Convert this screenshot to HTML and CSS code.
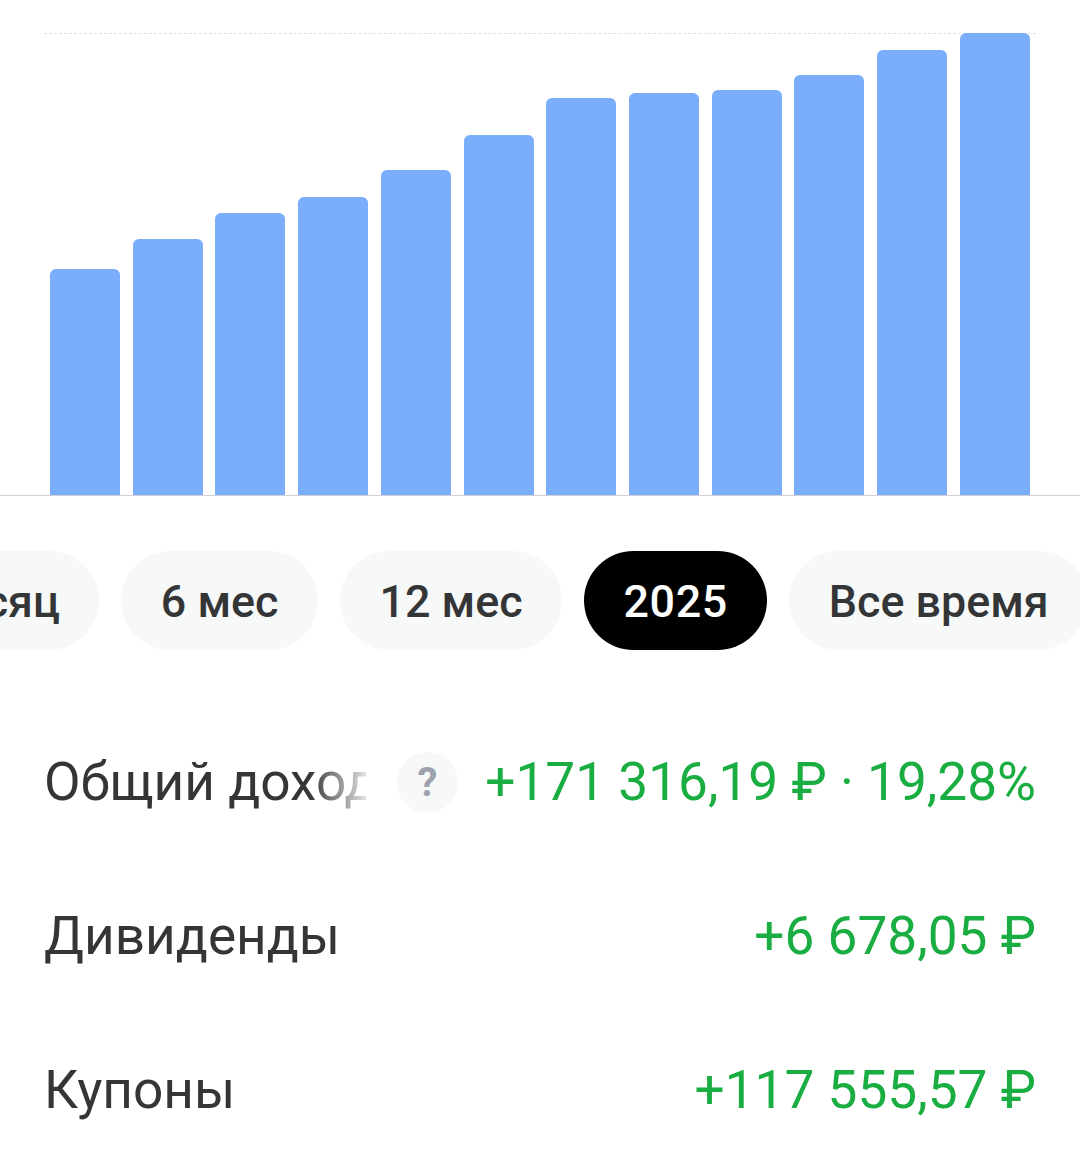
FILE: index.html
```html
<!DOCTYPE html>
<html lang="ru">
<head>
<meta charset="utf-8">
<title>Доход</title>
<link rel="stylesheet" href="styles.css">
</head>
<body>
<main class="page">
  <section class="chart">
    <div class="plot">
      <div class="bar" style="height:226px"></div>
      <div class="bar" style="height:256px"></div>
      <div class="bar" style="height:282px"></div>
      <div class="bar" style="height:298px"></div>
      <div class="bar" style="height:325px"></div>
      <div class="bar" style="height:360px"></div>
      <div class="bar" style="height:397px"></div>
      <div class="bar" style="height:402px"></div>
      <div class="bar" style="height:405px"></div>
      <div class="bar" style="height:420px"></div>
      <div class="bar" style="height:445px"></div>
      <div class="bar" style="height:462px"></div>
    </div>
  </section>
  <nav class="chips">
    <span class="chip">Месяц</span>
    <span class="chip">6 мес</span>
    <span class="chip">12 мес</span>
    <span class="chip chip-active">2025</span>
    <span class="chip">Все время</span>
  </nav>
  <section class="rows">
    <div class="row">
      <span class="label label-fade">Общий доход</span>
      <span class="help">?</span>
      <span class="value">+171 316,19 ₽ · 19,28%</span>
    </div>
    <div class="row">
      <span class="label">Дивиденды</span>
      <span class="value">+6 678,05 ₽</span>
    </div>
    <div class="row">
      <span class="label">Купоны</span>
      <span class="value">+117 555,57 ₽</span>
    </div>
  </section>
</main>
</body>
</html>
```
FILE: styles.css
```css
* { box-sizing: border-box; }
html, body { margin: 0; padding: 0; background: #fff; }
body {
  width: 1080px;
  height: 1172px;
  overflow: hidden;
  font-family: Roboto, "Noto Sans", sans-serif;
}
.page { width: 1080px; overflow: hidden; }
.chart {
  padding: 33px 44px 0;
  border-bottom: 1px solid #cfd0d2;
  height: 496px;
}
.plot {
  position: relative;
  height: 462px;
  padding: 0 6px;
  display: flex;
  align-items: flex-end;
  justify-content: space-between;
}
.plot::before {
  content: "";
  position: absolute;
  left: 0;
  right: 0;
  top: 0;
  border-top: 1px dashed #dfe1e3;
}
.bar {
  position: relative;
  width: 70px;
  background: #7aadfa;
  border-radius: 6px 6px 0 0;
}
.chips {
  display: flex;
  gap: 22px;
  margin-top: 55px;
  margin-left: -118px;
  width: 1300px;
}
.chip {
  flex: none;
  height: 99px;
  padding: 0 39.5px;
  border-radius: 50px;
  background: #f7f9f9;
  color: #333537;
  font-size: 44.8px;
  font-weight: 500;
  line-height: 101px;
  white-space: nowrap;
}
.chip-active { background: #000; color: #fff; letter-spacing: 0.6px; }
.rows { margin-top: 55px; padding: 0 44px; }
.row {
  display: flex;
  align-items: center;
  height: 154px;
  font-size: 53.2px;
  line-height: 60px;
}
.label { color: #333537; white-space: nowrap; }
.label-fade {
  width: 322px;
  overflow: hidden;
  -webkit-mask-image: linear-gradient(90deg, #000 82%, rgba(0, 0, 0, 0.15) 100%);
  mask-image: linear-gradient(90deg, #000 82%, rgba(0, 0, 0, 0.15) 100%);
}
.help {
  flex: none;
  width: 61px;
  height: 61px;
  margin-left: 31px;
  border-radius: 50%;
  background: #f7f9f9;
  color: #9da2ae;
  font-size: 40px;
  font-weight: 700;
  line-height: 61px;
  text-align: center;
}
.value { margin-left: auto; color: #1aad41; white-space: nowrap; }
```
